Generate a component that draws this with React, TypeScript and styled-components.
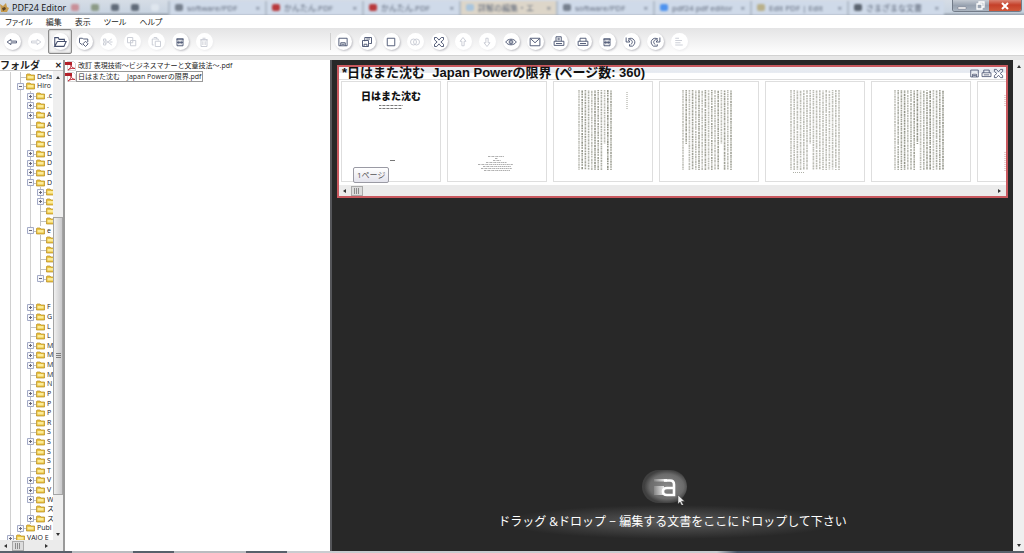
import React from "react";
import styled, { createGlobalStyle } from "styled-components";

const sans = `"Open Sans", "Noto Sans CJK JP", sans-serif`;
const ink = "#46506e";

const GlobalStyle = createGlobalStyle`
  * { box-sizing: border-box; }
  html, body { margin: 0; height: 100%; }
  body { font: 8px/10px ${sans}; color: #222; background: #fff; overflow: hidden; }
  button { font: inherit; color: inherit; border: 0; padding: 0; background: none; }
  ul { list-style: none; margin: 0; padding: 0; }
  h1, h2, p { margin: 0; font-weight: 400; }
  svg { display: block; flex: none; }
`;

const Window = styled.div`
  display: flex;
  flex-direction: column;
  height: 100vh;
`;

/* Title bar */
const TitleBar = styled.header`
  display: flex;
  align-items: center;
  flex: none;
  height: 15px;
  background: linear-gradient(#d6dde6, #c9d4e1 80%, #96a0ac);
  overflow: hidden;
`;
const AppTitle = styled.h1`
  flex: none;
  width: 54px;
  margin-left: 3px;
  font-size: 9px;
  line-height: 12px;
  color: #111;
  white-space: nowrap;
`;
const Behind = styled.div`
  display: flex;
  flex: 1;
  min-width: 0;
  height: 14px;
  filter: blur(1px);
  color: #5c6678;
`;
const PinnedIcons = styled.div`
  display: flex;
  align-items: center;
  gap: 12px;
  width: 102px;
  padding-left: 5px;
  flex: none;
`;
const Dot = styled.span<{ $c: string }>`
  width: 8px;
  height: 7px;
  border-radius: 2px;
  background: ${(p) => p.$c};
  flex: none;
`;
const BrowserTab = styled.div<{ $active?: boolean }>`
  display: flex;
  align-items: center;
  gap: 4px;
  flex: 1;
  min-width: 0;
  padding: 0 5px;
  border-left: 2px solid #b2bdca;
  white-space: nowrap;
  background: ${(p) => (p.$active ? "#ddd6c9" : "#cfdae9")};
`;
const TabText = styled.span`
  flex: 1;
`;
const Controls = styled.div`
  display: flex;
  align-self: flex-start;
  flex: none;
  margin: 0 2px 0 8px;
  height: 12px;
  border: 1px solid #727b88;
  border-top: 0;
  border-radius: 0 0 3px 3px;
  overflow: hidden;
`;
const ControlButton = styled.button<{ $close?: boolean }>`
  display: flex;
  align-items: center;
  justify-content: center;
  width: ${(p) => (p.$close ? 32 : 18)}px;
  background: ${(p) => (p.$close ? "linear-gradient(#d98373, #c5402a 45%, #d0583a)" : "linear-gradient(#c4cad2, #98a2b0 50%, #aab4c0)")};
`;

/* Menu and toolbar */
const MenuBar = styled.nav`
  display: flex;
  align-items: center;
  flex: none;
  gap: 13px;
  height: 13px;
  padding-left: 5px;
  background: #fff;
`;
const MenuButton = styled.button`
  font-size: 8px;
  line-height: 12px;
  font-feature-settings: "palt";
`;
const ToolRow = styled.div`
  display: flex;
  flex: none;
  height: 27px;
  background: linear-gradient(#e4e4e5, #fff);
`;
const ToolGroup = styled.div<{ $left?: boolean }>`
  display: flex;
  align-items: center;
  flex: ${(p) => (p.$left ? "none" : 1)};
  width: ${(p) => (p.$left ? "330px" : "auto")};
`;
const Divider = styled.span`
  width: 1px;
  height: 17px;
  background: #cfcfcf;
`;
const ToolButton = styled.button<{ $pressed?: boolean }>`
  display: flex;
  align-items: center;
  justify-content: center;
  width: 24px;
  height: 25px;
  border-radius: 2px;
  ${(p) => p.$pressed && "border: 1px solid #8a8a8a; box-shadow: inset 0 0 2px #999; background: #f1f1f1;"}
`;
const Disc = styled.span<{ $off?: boolean }>`
  display: flex;
  align-items: center;
  justify-content: center;
  width: 17px;
  height: 17px;
  border-radius: 50%;
  background: #fff;
  box-shadow: 1px 1px 2px ${(p) => (p.$off ? "#ececee" : "#c0c0c6")};
  svg { opacity: ${(p) => (p.$off ? 0.3 : 1)}; }
`;
const Strip = styled.div`
  flex: none;
  height: 5px;
  border-top: 1px solid #d2d2d2;
  background: #e6e6e6;
`;

/* Folder panel */
const Main = styled.main`
  display: flex;
  flex: 1;
  min-height: 0;
`;
const Browser = styled.div`
  display: flex;
  flex: none;
  width: 330px;
`;
const FolderPanel = styled.aside`
  display: flex;
  flex-direction: column;
  flex: none;
  width: 65px;
  border-right: 2px solid #9a9a9a;
`;
const PanelHead = styled.div`
  display: flex;
  align-items: center;
  flex: none;
  height: 11px;
  border-bottom: 1px solid #ccc;
`;
const PanelTitle = styled.h2`
  flex: 1;
  font-size: 10px;
  line-height: 10px;
  font-weight: 700;
`;
const CloseButton = styled.button`
  width: 10px;
  font-weight: 700;
`;
const TreeArea = styled.div`
  display: flex;
  flex: 1;
  min-height: 0;
`;
const TreeView = styled.div`
  flex: 1;
  min-width: 0;
  overflow: hidden;
  padding: 1px 0 0 1px;
`;
const Tree = styled.ul`
  display: flex;
  flex-direction: column;
  height: calc(100% + 3px);
`;
const Row = styled.li`
  display: flex;
  flex: 1;
  min-height: 0;
  align-items: center;
  white-space: nowrap;
  font-size: 7px;
`;
const Guide = styled.span`
  flex: none;
  align-self: stretch;
  width: 10px;
  border-right: 1px solid #d0d0d0;
`;
const Joint = styled.span`
  position: relative;
  display: flex;
  align-items: center;
  flex: none;
  align-self: stretch;
  width: 15px;
  &::before {
    content: "";
    position: absolute;
    left: 9px;
    top: 50%;
    width: 6px;
    border-top: 1px solid #c2c2c2;
  }
  &::after {
    content: "";
    position: absolute;
    left: 9px;
    top: 0;
    bottom: 0;
    border-left: 1px solid #c2c2c2;
  }
`;
const Expander = styled.button`
  position: relative;
  z-index: 1;
  margin-left: 6px;
  width: 7px;
  height: 7px;
  background: #fff;
`;
const RowLabel = styled.span`
  margin-left: 2px;
`;
const VScroll = styled.div<{ $w: number }>`
  display: flex;
  flex-direction: column;
  align-items: center;
  flex: none;
  width: ${(p) => p.$w}px;
  padding: 4px 0;
  background: #efefef;
`;
const Track = styled.div`
  display: grid;
  grid-template-rows: 135fr 276fr 35fr;
  flex: 1;
  width: 100%;
  padding: 2px 0;
`;
const Thumb = styled.div`
  grid-row: 2;
  display: flex;
  align-items: center;
  justify-content: center;
  border: 1px solid #a4a4a4;
  background: linear-gradient(90deg, #f0f0f0, #c9c9cb);
`;
const HScroll = styled.div`
  display: flex;
  align-items: center;
  flex: none;
  height: 11px;
  padding: 0 5px 0 3px;
  background: #ebebeb;
`;
const SidePanelScroll = styled(HScroll)`
  padding-right: 15px;
`;
const HThumb = styled.div`
  display: flex;
  align-items: center;
  justify-content: center;
  width: 12px;
  height: 10px;
  margin: 0 auto 0 5px;
  border: 1px solid #aaa;
  background: #dcdcdc;
`;

/* File list */
const FileList = styled.ul`
  flex: 1;
  min-width: 0;
  background: #fff;
`;
const FileRow = styled.li`
  display: flex;
  align-items: center;
  height: 11px;
`;
const FileName = styled.button<{ $focus?: boolean }>`
  padding: 0 1px;
  border: 1px solid ${(p) => (p.$focus ? "#999" : "transparent")};
  font-size: 7px;
  line-height: 9px;
  white-space: pre;
  color: #222;
`;

/* Document area */
const Stage = styled.section`
  display: flex;
  flex-direction: column;
  flex: 1;
  min-width: 0;
  padding: 5px 5px 0 5px;
  border-left: 2px solid #55565a;
  background: #282828;
`;
const DocCard = styled.article`
  display: flex;
  flex-direction: column;
  height: 133px;
  border: 2px solid #c9595f;
  background: #fff;
`;
const DocHead = styled.div`
  display: flex;
  align-items: center;
  gap: 1px;
  height: 13px;
  padding: 0 2px 0 3px;
  border-bottom: 1px solid #ddd;
  background: linear-gradient(#eef0f5, #e4e9f0 45%, #fff 50%);
`;
const DocTitle = styled.h2`
  flex: 1;
  font-size: 13px;
  line-height: 12px;
  font-weight: 700;
  font-family: "Liberation Sans", "Noto Sans CJK JP", sans-serif;
  white-space: pre;
  color: #111;
`;
const Pages = styled.div`
  display: flex;
  flex: 1;
  gap: 6px;
  padding: 1px 0 3px 2px;
  overflow: hidden;
`;
const Page = styled.div`
  position: relative;
  display: flex;
  flex-direction: column;
  align-items: center;
  flex: none;
  width: 100px;
  border: 1px solid #dedede;
  background: #fff;
`;
const CoverTitle = styled.p`
  margin-top: 8px;
  font-size: 10px;
  line-height: 12px;
  font-weight: 900;
  color: #111;
  white-space: nowrap;
`;
const PageBadge = styled.span`
  position: absolute;
  left: 11px;
  bottom: -2px;
  padding: 1px 3px;
  border: 1px solid #9a9aa4;
  border-radius: 2px;
  background: linear-gradient(#fff, #e3e3ec);
  font-size: 8px;
  line-height: 12px;
  color: #555;
  white-space: nowrap;
`;
const DropHint = styled.div`
  display: flex;
  flex-direction: column;
  align-items: center;
  margin-top: auto;
  padding-bottom: 12px;
`;
const HintText = styled.p`
  display: flex;
  align-items: center;
  justify-content: center;
  width: 100%;
  height: 34px;
  font-size: 12px;
  line-height: 14px;
  color: #fff;
  white-space: nowrap;
  background: radial-gradient(ellipse 170px 17px at center, #5c5c5c 0%, #444 45%, #282828 100%);
`;
const TaskEdge = styled.footer`
  flex: none;
  height: 2px;
  background: linear-gradient(90deg, #58616b 0 7%, #b9bcc0 7% 13%, #58616b 13% 17%, #b9bcc0 17% 24%, #58616b 24% 28%, #c9ccd0 28% 70%, #4a5668 72%, #58616b);
`;

type IconName = keyof typeof icons;
const icons = {
  back: <path d="M1.500 8l5-3.500v2.300h7.500v2.400H6.500v2.300z" />,
  forward: <path d="M14.500 8l-5-3.500v2.300H2v2.400h7.500v2.300z" />,
  open: <path d="M2 13V3h4l1 2h6v2M2 13L5 7.500h10L12.500 13z" />,
  shield: <path d="M6 12L2 9V3h4l1 1h6v4M10 7l3.500 3.500L10 14l-3.500-3.500z" />,
  cut: <path d="M2 4h3v3H2zM2 9h3v3H2zM5 6l8 6M5 10l8-6M10 8h4" />,
  copy: <path d="M2 2h7v7H2zM6 6h7v7H6z" />,
  paste: <path d="M5 12H3V4h8v2M5 2h4v2M7 7h7v7H7z" />,
  list: <path d="M4 4h8v9H4zM3 4h10M6.500 6v5M9.500 6v5M4 8.500h8" />,
  trash: <path d="M4 5h8v9H4zM3 5h10M6 3h4M6.500 7v5M9.500 7v5" />,
  save: <path d="M2.500 3h11v10h-11zM5 13V9h6v4M6 11h4" />,
  saveAll: <path d="M5 7V2h9v8h-3M2 6h8v8H2zM4 14v-3h4v3M7 4h5" />,
  page: <path d="M3 3h10v10H3z" />,
  merge: <path d="M10 8a4 4 0 1 1-8 0a4 4 0 1 1 8 0zM14 8a4 4 0 1 1-8 0a4 4 0 1 1 8 0z" />,
  close: <path d="M2 2h3l3 3.500L11 2h3v3l-3.500 3 3.500 3v3h-3L8 10.500 5 14H2v-3l3.500-3L2 5z" />,
  up: <path d="M8 2l4 5H9.500v6h-3V7H4z" />,
  down: <path d="M8 14l4-5H9.500V3h-3v6H4z" />,
  eye: <path d="M1 8c3-5 11-5 14 0c-3 5-11 5-14 0zM10.500 8a2.500 2.500 0 1 1-5 0a2.500 2.500 0 1 1 5 0zM8 6.500v3" />,
  mail: <path d="M1.500 3h13v10h-13zM2 3.500l6 5.500 6-5.500" />,
  printDoc: <path d="M4 7V1h7v6M6 3h3M6 5h3M1.500 7h13v5.500h-13zM4 10h8" />,
  print: <path d="M4 7V3h8v4M1.500 7h13v5.500h-13zM4 10h8" />,
  left: <path d="M1.500 2v6h5L4.500 5.500C9 3 12 9 7.500 11.500M4 4c7-4 13 5 6 9.500H6V11" />,
  right: <path d="M14.500 2v6h-5l2-2.500C7 3 4 9 8.500 11.500M12 4C5 0-1 9 6 13.500h5V11" />,
  text: <path d="M3 3h5M3 6h9M3 9h7M3 12h10" />,
};

const Icon = ({ name, size = 14 }: { name: IconName; size?: number }) => (
  <svg width={size} height={size} viewBox="0 0 16 16" fill="none" stroke={ink} strokeWidth="1.200">
    {icons[name]}
  </svg>
);

const Arrow = ({ dir }: { dir: "up" | "down" | "left" | "right" }) => {
  const d = { up: "M0 4h4L2 1z", down: "M0 1h4L2 4z", left: "M4 0v4L1 2z", right: "M1 0v4l3-2z" }[dir];
  return (
    <svg width="4" height="4" viewBox="0 0 4 4" fill="#333">
      <path d={d} />
    </svg>
  );
};

const Grip = () => (
  <svg width="6" height="6" viewBox="0 0 6 6" stroke="#777">
    <path d="M.5 0v6M2.500 0v6M4.500 0v6" strokeWidth=".8" />
  </svg>
);

const Folder = () => (
  <svg width="9" height="8" viewBox="0 0 9 8">
    <path d="M.5 7V1.500L1 1h3l1 1h3.500v5z" fill="#e9c240" stroke="#b58a20" strokeWidth=".7" />
    <path d="M1.500 3h6v2.500h-6z" fill="#fbeb9a" />
  </svg>
);

const PdfIcon = () => (
  <svg width="11" height="10" viewBox="0 0 11 10">
    <path d="M2.500.5h6l2 2v7h-8z" fill="#fff" stroke="#bbb" strokeWidth=".6" />
    <path d="M0 1h7v3H0z" fill="#b3202a" />
    <path d="M3 9c2-1 3-3 3-5c1 3 2 3 4 3.500c-3-.5-5 0-7 1.500z" fill="none" stroke="#c0303a" />
  </svg>
);

const leftTools: [IconName, string, boolean?][] = [
  ["back", "戻る"], ["forward", "進む", true], ["open", "開く"], ["shield", "お気に入り"],
  ["cut", "切り取り", true], ["copy", "コピー", true], ["paste", "貼り付け", true], ["list", "一覧"], ["trash", "削除", true],
];
const rightTools: [IconName, string, boolean?][] = [
  ["save", "保存"], ["saveAll", "すべて保存"], ["page", "新規"], ["merge", "結合", true], ["close", "閉じる"],
  ["up", "上へ", true], ["down", "下へ", true], ["eye", "プレビュー"], ["mail", "メール"], ["printDoc", "文書を印刷"],
  ["print", "印刷"], ["list", "ページ"], ["left", "左回転"], ["right", "右回転"], ["text", "テキスト", true],
];

/* Each entry: depth, expander sign ("" for none), label; null is an empty line below an open folder */
const tree: ([number, string, string] | null)[] = [
  [1, "", "Defa"], [1, "-", "Hiro"], [2, "+", ".c"], [2, "+", "."], [2, "+", "A"], [2, "", "A"], [2, "", "C"], [2, "", "C"],
  [2, "+", "D"], [2, "+", "D"], [2, "+", "D"], [2, "-", "D"], [3, "+", ""], [3, "+", ""], [3, "", ""], [3, "", ""],
  [2, "-", "e"], [3, "", ""], [3, "", ""], [3, "", ""], [3, "", ""], [3, "-", ""], null, null,
  [2, "+", "F"], [2, "+", "G"], [2, "", "L"], [2, "", "L"], [2, "+", "M"], [2, "+", "M"], [2, "+", "M"], [2, "", "M"],
  [2, "", "N"], [2, "+", "P"], [2, "+", "P"], [2, "", "P"], [2, "", "R"], [2, "", "S"], [2, "+", "S"], [2, "", "S"],
  [2, "", "S"], [2, "", "T"], [2, "+", "V"], [2, "+", "V"], [2, "+", "W"], [2, "", "ス"], [2, "+", "ス"], [1, "+", "Publ"], [0, "+", "VAIO E"],
];

const TreeRow = ({ depth, sign, label }: { depth: number; sign: string; label: string }) => (
  <Row>
    {Array.from({ length: depth }, (_, i) => <Guide key={i} />)}
    <Joint>
      {sign && (
        <Expander aria-label={sign === "+" ? "展開" : "折りたたむ"}>
          <svg width="7" height="7" viewBox="0 0 7 7" fill="#f6f7fb" stroke="#a3aac6">
            <path d="M.5.5h6v6h-6z" />
            <path d={sign === "+" ? "M2 3.500h3M3.500 2v3" : "M2 3.500h3"} stroke="#667" />
          </svg>
        </Expander>
      )}
    </Joint>
    <Folder />
    {label && <RowLabel>{label}</RowLabel>}
  </Row>
);

/* Thumbnail of a page set in vertical columns of tiny type */
const TypeColumns = ({ x, short, note, seed }: { x: number; short?: boolean; note?: number; seed: number }) => (
  <svg width="98" height="99" viewBox="0 0 98 99" fill="none" stroke="#77796a">
    {Array.from({ length: short ? 11 : 16 }, (_, i) => {
      const cx = x + i * 3.2;
      const end = 88 - ((i * seed * 7) % 11 === 3 ? 26 : 0);
      return (
        <path
          key={i}
          d={`M${cx} 8V${end}`}
          strokeWidth="1.600"
          strokeOpacity={0.5 + ((i * seed) % 4) * 0.1}
          strokeDasharray={`1.7 .6 ${1 + ((i * seed) % 3) * 0.7} .5 .9 .8 2.3 .7`}
          strokeDashoffset={(i * seed * 1.7) % 8}
        />
      );
    })}
    {short && <path d="M73 10v17" strokeDasharray="1 1" strokeOpacity=".7" />}
    {note && <path d={`M${note} 90.500h12`} strokeDasharray="1 1" strokeOpacity=".6" />}
  </svg>
);

const tabs: [string, string, boolean?][] = [
  ["software/PDF", "#76808e"], ["かんたん.PDF", "#b9393c"], ["かんたん.PDF", "#b9393c"], ["詳解の編集・エ", "#a9c5dd", true],
  ["software/PDF", "#76808e"], ["pdf24 pdf editor", "#4e93ef"], ["Edit PDF | Edit", "#b9b08a"], ["さまざまな文書", "#5b6470"],
];

const Tool = ({ item: [name, label, off] }: { item: [IconName, string, boolean?] }) => (
  <ToolButton aria-label={label} disabled={off} $pressed={name === "open"}>
    <Disc $off={off}><Icon name={name} size={name === "open" ? 14 : 12} /></Disc>
  </ToolButton>
);

export default function App() {
  return (
    <Window>
      <GlobalStyle />
      <TitleBar>
        <svg width="9" height="11" viewBox="0 0 9 11">
          <path d="M0 2l3 2 3-3 1 4 2 1-2 4H1z" fill="#c79b4e" />
          <path d="M2 6l3-1 1 2-3 2z" fill="#5b4528" />
        </svg>
        <AppTitle>PDF24 Editor</AppTitle>
        <Behind aria-hidden="true">
          <PinnedIcons>
            <Dot $c="#c98f98" /><Dot $c="#8c9a86" /><Dot $c="#606a78" /><Dot $c="#606a78" /><Dot $c="#dfe6ee" />
          </PinnedIcons>
          {tabs.map(([text, color, active], i) => (
            <BrowserTab key={i} $active={active}>
              <Dot $c={color} />
              <TabText>{text}</TabText>
              <span>×</span>
            </BrowserTab>
          ))}
        </Behind>
        <Controls>
          <ControlButton aria-label="最小化">
            <svg width="10" height="8" viewBox="0 0 10 8"><path d="M1 5h8v2H1z" fill="#fff" stroke="#667" strokeWidth=".4" /></svg>
          </ControlButton>
          <ControlButton aria-label="元に戻す">
            <svg width="9" height="9" viewBox="0 0 9 9" fill="none" stroke="#fff" strokeWidth="1.300"><path d="M3 3V1h5v5H6M1 3h5v5H1z" /></svg>
          </ControlButton>
          <ControlButton $close aria-label="閉じる">
            <svg width="8" height="8" viewBox="0 0 8 8" stroke="#fff" strokeWidth="2"><path d="M1 1l6 6M7 1L1 7" /></svg>
          </ControlButton>
        </Controls>
      </TitleBar>
      <MenuBar>
        {["ファイル", "編集", "表示", "ツール", "ヘルプ"].map((m) => <MenuButton key={m}>{m}</MenuButton>)}
      </MenuBar>
      <ToolRow>
        <ToolGroup $left>{leftTools.map((t) => <Tool key={t[0]} item={t} />)}</ToolGroup>
        <ToolGroup><Divider />{rightTools.map((t) => <Tool key={t[0]} item={t} />)}</ToolGroup>
      </ToolRow>
      <Strip />
      <Main>
        <Browser>
          <FolderPanel>
            <PanelHead>
              <PanelTitle>フォルダ</PanelTitle>
              <CloseButton aria-label="閉じる">✕</CloseButton>
            </PanelHead>
            <TreeArea>
              <TreeView>
                <Tree>
                  {tree.map((item, i) =>
                    item ? (
                      <TreeRow key={i} depth={item[0]} sign={item[1]} label={item[2]} />
                    ) : (
                      <Row key={i}><Guide /><Guide /><Guide /></Row>
                    )
                  )}
                </Tree>
              </TreeView>
              <VScroll $w={10}>
                <Arrow dir="up" />
                <Track><Thumb>
                  <svg width="5" height="6" viewBox="0 0 5 6" stroke="#666"><path d="M0 .5h5M0 2.500h5M0 4.500h5" strokeWidth=".8" /></svg>
                </Thumb></Track>
                <Arrow dir="down" />
              </VScroll>
            </TreeArea>
            <SidePanelScroll>
              <Arrow dir="left" />
              <HThumb><Grip /></HThumb>
              <Arrow dir="right" />
            </SidePanelScroll>
          </FolderPanel>
          <FileList>
            <FileRow><PdfIcon /><FileName>改訂 表現技術〜ビジネスマナーと文章技法〜.pdf</FileName></FileRow>
            <FileRow><PdfIcon /><FileName $focus>日はまた沈む　Japan Powerの限界.pdf</FileName></FileRow>
          </FileList>
        </Browser>
        <Stage>
          <DocCard>
            <DocHead>
              <DocTitle>*日はまた沈む  Japan Powerの限界 (ページ数: 360)</DocTitle>
              <button aria-label="保存"><Icon name="save" size={11} /></button>
              <button aria-label="印刷"><Icon name="print" size={11} /></button>
              <button aria-label="閉じる"><Icon name="close" size={11} /></button>
            </DocHead>
            <Pages>
              <Page>
                <CoverTitle>日はまた沈む</CoverTitle>
                <svg width="60" height="60" viewBox="0 0 60 60" stroke="#777" fill="none">
                  <path d="M18 3.500h24M18 6.500h23" strokeDasharray="2 .6 1 .4" />
                  <path d="M29 58.500h5" />
                </svg>
                <PageBadge>1ページ</PageBadge>
              </Page>
              <Page>
                <svg width="98" height="99" viewBox="0 0 98 99" stroke="#999" fill="none" strokeDasharray="2 .6 1 .5" strokeWidth=".8">
                  <path d="M40 74.500h16M47 76.500h3M45 78.500h8M38 80.500h21M30 82.500h35M35 84.500h28M33 86.500h31M36 88.500h26" />
                </svg>
              </Page>
              <Page><TypeColumns x={25} short seed={3} /></Page>
              <Page><TypeColumns x={23} seed={2} /></Page>
              <Page><TypeColumns x={25} note={27} seed={4} /></Page>
              <Page><TypeColumns x={23} seed={5} /></Page>
              <Page>
                <svg width="98" height="99" viewBox="0 0 98 99" stroke="#a66" fill="none" strokeDasharray="1 1" strokeOpacity=".6">
                  <path d="M27 13v11M27 70v20" />
                </svg>
              </Page>
            </Pages>
            <HScroll>
              <Arrow dir="left" />
              <HThumb><Grip /></HThumb>
              <Arrow dir="right" />
            </HScroll>
          </DocCard>
          <DropHint>
            <svg width="62" height="40" viewBox="0 0 62 40">
              <defs>
                <radialGradient id="glow" cx=".55">
                  <stop offset="0" stopColor="#8a8a8a" />
                  <stop offset=".75" stopColor="#6b6b6b" />
                  <stop offset="1" stopColor="#404040" />
                </radialGradient>
                <linearGradient id="trail">
                  <stop offset="0" stopColor="#fff" stopOpacity=".15" />
                  <stop offset="1" stopColor="#fff" />
                </linearGradient>
              </defs>
              <rect x="0" y="5" width="45" height="33" rx="17" fill="url(#glow)" />
              <path d="M12 14h13v2.500H12zM12 21h10v9H12z" fill="url(#trail)" />
              <path d="M22 15.500h6q4 0 4 4V30h-7q-4 0-4-3.500T25 23h7" fill="none" stroke="#fff" strokeWidth="2.600" />
              <path d="M36 30v9l2-2 2 4 1.500-.7-2-4h3z" fill="#eee" stroke="#444" strokeWidth=".5" />
            </svg>
            <HintText>ドラッグ &amp;ドロップ − 編集する文書をここにドロップして下さい</HintText>
          </DropHint>
        </Stage>
        <VScroll $w={11}>
          <Arrow dir="up" />
          <Track />
          <Arrow dir="down" />
        </VScroll>
      </Main>
      <TaskEdge />
    </Window>
  );
}
